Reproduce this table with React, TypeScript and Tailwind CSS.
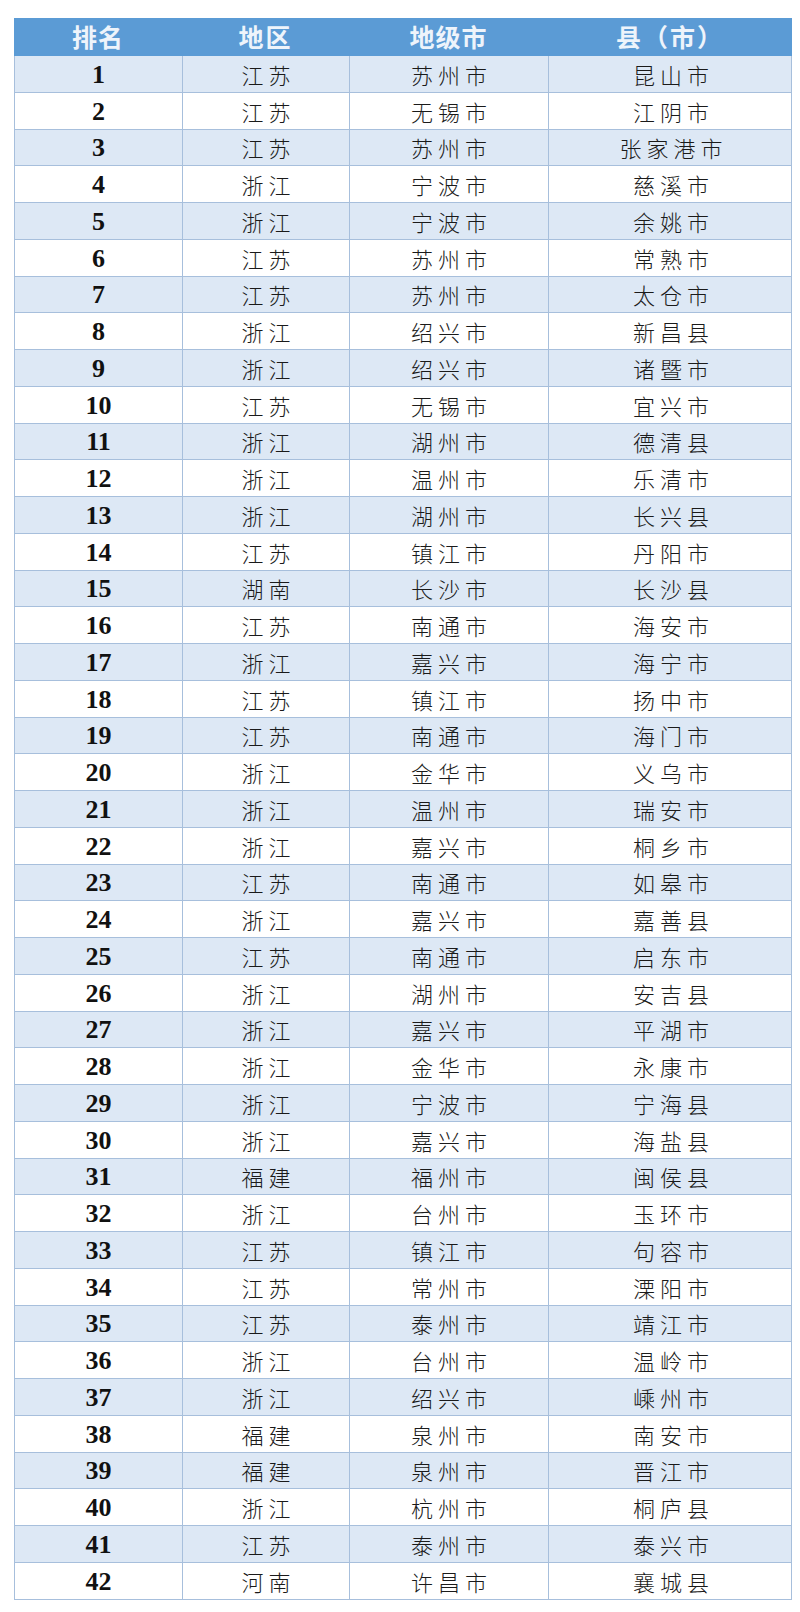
import React from "react";

const rows: [string, string, string][] = [
  ["江苏", "苏州市", "昆山市"],
  ["江苏", "无锡市", "江阴市"],
  ["江苏", "苏州市", "张家港市"],
  ["浙江", "宁波市", "慈溪市"],
  ["浙江", "宁波市", "余姚市"],
  ["江苏", "苏州市", "常熟市"],
  ["江苏", "苏州市", "太仓市"],
  ["浙江", "绍兴市", "新昌县"],
  ["浙江", "绍兴市", "诸暨市"],
  ["江苏", "无锡市", "宜兴市"],
  ["浙江", "湖州市", "德清县"],
  ["浙江", "温州市", "乐清市"],
  ["浙江", "湖州市", "长兴县"],
  ["江苏", "镇江市", "丹阳市"],
  ["湖南", "长沙市", "长沙县"],
  ["江苏", "南通市", "海安市"],
  ["浙江", "嘉兴市", "海宁市"],
  ["江苏", "镇江市", "扬中市"],
  ["江苏", "南通市", "海门市"],
  ["浙江", "金华市", "义乌市"],
  ["浙江", "温州市", "瑞安市"],
  ["浙江", "嘉兴市", "桐乡市"],
  ["江苏", "南通市", "如皋市"],
  ["浙江", "嘉兴市", "嘉善县"],
  ["江苏", "南通市", "启东市"],
  ["浙江", "湖州市", "安吉县"],
  ["浙江", "嘉兴市", "平湖市"],
  ["浙江", "金华市", "永康市"],
  ["浙江", "宁波市", "宁海县"],
  ["浙江", "嘉兴市", "海盐县"],
  ["福建", "福州市", "闽侯县"],
  ["浙江", "台州市", "玉环市"],
  ["江苏", "镇江市", "句容市"],
  ["江苏", "常州市", "溧阳市"],
  ["江苏", "泰州市", "靖江市"],
  ["浙江", "台州市", "温岭市"],
  ["浙江", "绍兴市", "嵊州市"],
  ["福建", "泉州市", "南安市"],
  ["福建", "泉州市", "晋江市"],
  ["浙江", "杭州市", "桐庐县"],
  ["江苏", "泰州市", "泰兴市"],
  ["河南", "许昌市", "襄城县"],
];

const cjk = "font-['Noto_Sans_CJK_SC',sans-serif]";

export default function App() {
  return (
    <div className="w-[800px] min-h-[1612px] bg-white pt-[18px] pl-[14px] pb-[12px]">
      <div className="w-[778px]">
        <div
          className={`grid grid-cols-[168px_167px_199px_244px] h-[38px] bg-[#5b9bd5] text-[#eef4fb] text-[25px] font-bold ${cjk}`}
        >
          <div className="flex items-center justify-center tracking-[1px]">排名</div>
          <div className="flex items-center justify-center tracking-[2px]">地区</div>
          <div className="flex items-center justify-center tracking-[1px]">地级市</div>
          <div className="flex items-center justify-center tracking-[2px]">县（市）</div>
        </div>
        {rows.map((r, i) => (
          <div
            key={i}
            className={`grid grid-cols-[168px_167px_199px_244px] h-[36.76px] border-l border-r border-b border-[#a7bfdc] ${
              i % 2 === 0 ? "bg-[#dde8f5]" : "bg-white"
            }`}
          >
            <div className="flex items-center justify-center border-r border-[#a7bfdc] font-['Liberation_Serif',serif] font-bold text-[26px] text-[#111] leading-none pt-[2px]">
              {i + 1}
            </div>
            <div
              className={`flex items-center justify-center border-r border-[#a7bfdc] ${cjk} font-light text-[22px] tracking-[5px] pl-[5px] text-[#1a1a1a] leading-none`}
            >
              {r[0]}
            </div>
            <div
              className={`flex items-center justify-center border-r border-[#a7bfdc] ${cjk} font-light text-[22px] tracking-[5px] pl-[5px] text-[#1a1a1a] leading-none`}
            >
              {r[1]}
            </div>
            <div
              className={`flex items-center justify-center ${cjk} font-light text-[22px] tracking-[5px] pl-[5px] text-[#1a1a1a] leading-none`}
            >
              {r[2]}
            </div>
          </div>
        ))}
      </div>
    </div>
  );
}
